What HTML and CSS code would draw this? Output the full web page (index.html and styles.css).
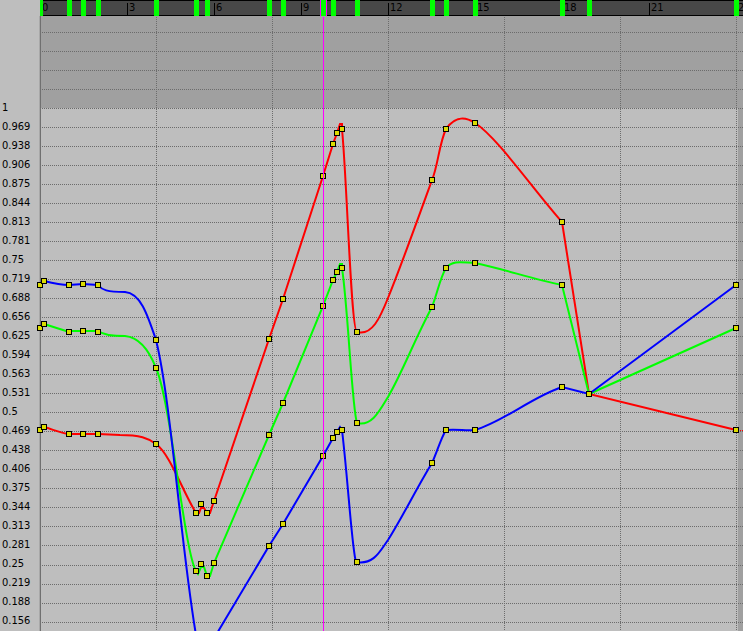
FILE: index.html
```html
<!DOCTYPE html>
<html lang="en">
<head>
<meta charset="utf-8">
<title>Curve editor</title>
<link rel="stylesheet" href="styles.css">
</head>
<body>
<main class="editor">
<ol class="scale" id="scale"></ol>
<section class="track">
<header class="ruler" id="ruler"></header>
<svg class="plot" id="plot" aria-label="Colour curves"></svg>
</section>
</main>
<script src="script.js"></script>
</body>
</html>
```
FILE: styles.css
```css
* { box-sizing: border-box; }
body {
  margin: 0;
  background: #bebebe;
  color: #000;
  font: 11px/19px "DejaVu Sans Condensed", "DejaVu Sans", sans-serif;
}
.editor {
  display: grid;
  grid-template-columns: 40px minmax(0, 1fr);
  height: 100vh;
  overflow: hidden;
}
.scale {
  margin: 0;
  padding: 98px 0 0 2px;
  list-style: none;
  overflow: hidden;
}
.track {
  display: flex;
  flex-direction: column;
  min-width: 0;
  min-height: 0;
}
.ruler {
  position: relative;
  flex: 0 0 16px;
  overflow: hidden;
  background: #484848;
  box-shadow: inset 0 1px #000, inset 0 -1px #000;
}
.tick {
  position: absolute;
  top: 3px;
  height: 12px;
  padding-left: 1px;
  border-left: 1px solid #000;
  line-height: 10px;
}
.key {
  position: absolute;
  top: 0;
  width: 5px;
  height: 16px;
  background: #0f0;
}
.key-current { box-shadow: -1px 0 #f0f, 1px 0 #f0f; }
.plot {
  display: block;
  flex: 1;
  width: 100%;
  min-height: 0;
  overflow: visible;
}
.outside { fill: #a0a0a0; }
.axis { fill: #707070; }
.axis-edge { fill: #a8a8a8; }
.grid {
  stroke: #6c6c6c;
  stroke-dasharray: 1 1;
}
.cursor { stroke: #f0f; }
.curve { fill: none; stroke-width: 2; }
.red { stroke: #f00; }
.green { stroke: #0f0; }
.blue { stroke: #00f; }
.tail { stroke-dasharray: 1 1; }
.point-edge { fill: #000; }
.point { fill: #dcdc00; }
```
FILE: script.js
```js
const ORIGIN = 40;
const TOP = 16;

const scale = document.getElementById("scale");
const levels = ["1", "0.969", "0.938", "0.906", "0.875", "0.844", "0.813", "0.781", "0.75",
  "0.719", "0.688", "0.656", "0.625", "0.594", "0.563", "0.531", "0.5", "0.469", "0.438",
  "0.406", "0.375", "0.344", "0.313", "0.281", "0.25", "0.219", "0.188", "0.156"];
scale.innerHTML = levels.map(v => `<li>${v}</li>`).join("");

const ticks = [0, 3, 6, 9, 12, 15, 18, 21, 24];
const keys = [38, 67, 81, 96, 154, 194, 205, 267, 281, 321, 331, 355, 430, 444, 473, 560, 587, 734];
document.getElementById("ruler").innerHTML =
  ticks.map(t => `<span class="tick" style="left:${t * 29}px">${t}</span>`).join("") +
  keys.map(x => `<i class="key${x === 321 ? " key-current" : ""}" style="left:${x - ORIGIN}px"></i>`).join("");

const curves = [
  ["red", `M40 430L44 427C52 429 60 433 69 434H98L120 435C140 435 148 438 156 444
    C170 454 182 490 196 513H199L201 508H204L207 513H210L214 501L269 339L283 299L323 176L333 144L337 133
    L340 124H342V129C347 180 351 331 357 332C372 336 380 318 388 298C401 266 415 227 432 180
    C438 166 439 144 446 129C456 115 466 117 475 123C497 137 532 188 562 222L589 394L736 430`],
  ["green", `M40 328L44 324L66 331L83 331H98C104 335 111 336 125 336C136 337 147 345 156 368
    C171 402 184 550 196 571L198 574L201 567H204L207 576H210L214 563L269 435L283 403L323 306L333 280L337 272
    L340 264H342V268C348 307 352 409 357 423C372 427 380 410 388 397C402 373 414 341 432 307
    C438 291 440 278 446 268C453 259 465 263 475 263C504 269 532 279 562 285L589 394L736 328`],
  ["blue", `M40 285L44 281C52 283 60 285 69 285L83 284L98 285C102 290 107 292 125 292
    C140 293 147 313 156 340C171 400 181 548 196 635M216 635L269 546L283 524L323 456L333 438L337 432
    L340 427L342 430C348 480 352 550 356 562C374 565 380 551 388 540C402 518 415 491 432 463
    C437 452 441 438 446 430C458 429 466 431 475 430C503 422 532 397 562 387L589 394L736 285`]
];
const points = {
  red: [[40,430],[44,427],[69,434],[83,434],[98,434],[156,444],[196,513],[201,504],[207,513],[214,501],
    [269,339],[283,299],[323,176],[333,144],[337,133],[342,129],[357,332],[432,180],[446,129],[475,123],
    [562,222],[589,394],[736,430]],
  green: [[40,328],[44,324],[69,332],[83,331],[98,332],[156,368],[196,571],[201,564],[207,576],[214,563],
    [269,435],[283,403],[323,306],[333,280],[337,272],[342,268],[357,423],[432,307],[446,268],[475,263],
    [562,285],[589,394],[736,328]],
  blue: [[40,285],[44,281],[69,285],[83,284],[98,285],[156,340],[269,546],[283,524],[323,456],[333,438],
    [337,432],[342,430],[357,562],[432,463],[446,430],[475,430],[562,387],[589,394],[736,285]]
};

const rows = [32, 51, 70, 89];
for (let i = 0; i < 28; i++) rows.push(108 + i * 19 + (i > 23 ? 1 : 0));
const columns = [156, 272, 388, 504, 620, 736];

const plot = document.getElementById("plot");

function draw() {
  const w = plot.clientWidth + ORIGIN;
  const h = plot.clientHeight + TOP;
  plot.setAttribute("viewBox", `${ORIGIN} ${TOP} ${w - ORIGIN} ${h - TOP}`);
  plot.innerHTML =
    `<rect class="outside" x="40" y="16" width="${w - 40}" height="92"/>` +
    `<rect class="outside" x="738" y="108" width="${Math.max(0, w - 738)}" height="${h - 108}"/>` +
    `<rect class="axis-edge" x="39" y="16" width="1" height="${h - 16}"/>` +
    `<rect class="axis" x="40" y="16" width="1" height="${h - 16}"/>` +
    rows.map(y => `<path class="grid" d="M42 ${y}.5H${w}"/>`).join("") +
    columns.map(x => `<path class="grid" d="M${x}.5 17V${h}"/>`).join("") +
    curves.map(([c, d]) => `<path class="curve ${c}" d="${d}"/>`).join("") +
    `<path class="tail red" d="M740 430.5H${w}"/>` +
    Object.values(points).flat().map(([x, y]) =>
      `<rect class="point-edge" x="${x - 3}" y="${y - 3}" width="6" height="6"/>` +
      `<rect class="point" x="${x - 2}" y="${y - 2}" width="4" height="4"/>`).join("") +
    `<path class="cursor" d="M323.5 17V${h}"/>`;
}
draw();
addEventListener("resize", draw);
```
